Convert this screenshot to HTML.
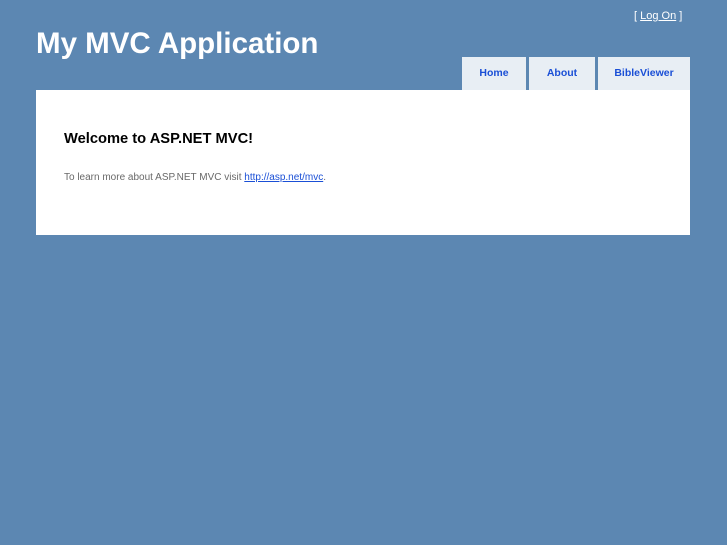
<!DOCTYPE html>
<html><head><style>
body{margin:0;background:#5c87b2;font-family:"Liberation Sans",sans-serif;width:727px;height:545px;position:relative;overflow:hidden}
h1{position:absolute;left:36px;top:27px;margin:0;color:#fff;font-size:29.5px;font-weight:bold}
.logon{position:absolute;left:634px;top:10px;font-size:11px;color:#fff}
.logon a{color:#fff}
.tab{position:absolute;top:57px;height:33px;background:#e8eef4;color:#1a4fd6;font-weight:bold;font-size:10.5px;line-height:32px;text-align:center}
.main{position:absolute;left:36px;top:90px;width:654px;height:145px;background:#fff}
h2{position:absolute;left:28px;top:41px;margin:0;font-size:14.7px;color:#000}
p{position:absolute;left:28px;top:82px;margin:0;font-size:10px;color:#696969}
p a{color:#1a4fd6}
</style></head><body>
<h1>My MVC Application</h1>
<div class="logon">[ <a href="#">Log On</a> ]</div>
<div class="tab" style="left:462px;width:64px">Home</div>
<div class="tab" style="left:529px;width:66px">About</div>
<div class="tab" style="left:598px;width:92px">BibleViewer</div>
<div class="main"><h2>Welcome to ASP.NET MVC!</h2>
<p>To learn more about ASP.NET MVC visit <a href="#">http://asp.net/mvc</a>.</p></div>
</body></html>
